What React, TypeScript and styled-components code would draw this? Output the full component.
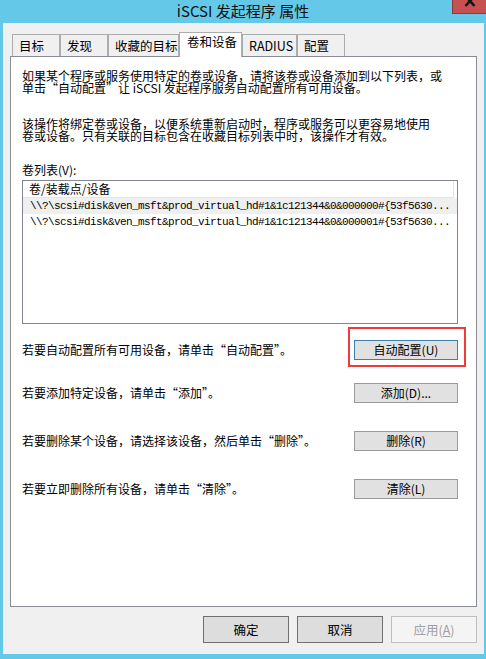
import React from "react";
import styled, { createGlobalStyle } from "styled-components";

const CJK = `"Noto Sans CJK SC", "Noto Sans", sans-serif`;
const MONO = `"Liberation Mono", "DejaVu Sans Mono", monospace`;

const Global = createGlobalStyle`
  html, body { margin: 0; padding: 0; background: #64c8e9; }
  body { font-family: ${CJK}; }
`;

const Window = styled.div`
  width: 486px;
  height: 659px;
  background: #64c8e9;
  display: flex;
  flex-direction: column;
  overflow: hidden;
`;

const TitleBar = styled.div`
  height: 23px;
  flex-shrink: 0;
  display: grid;
  grid-template-columns: 1fr auto 1fr;
  align-items: start;
`;

const Title = styled.div`
  grid-column: 2;
  font: 15px/22px ${CJK};
  color: #111;
  white-space: nowrap;
`;

const CloseButton = styled.div`
  grid-column: 3;
  justify-self: end;
  width: 34px;
  height: 14px;
  box-sizing: border-box;
  background: #c75050;
  border-left: 1px solid #8e3a3a;
  border-bottom: 1px solid #8e3a3a;
  display: flex;
`;

const Client = styled.div`
  margin: 0 2px 5px 3px;
  height: 631px;
  background: #f0f0f0;
  display: flex;
  flex-direction: column;
`;

const TabRow = styled.div`
  display: flex;
  align-items: flex-end;
  height: 25px;
  margin: 9px 0 -1px 9px;
  position: relative;
  z-index: 1;
`;

const Tab = styled.div<{ $w: number; $active?: boolean }>`
  width: ${(p) => p.$w}px;
  box-sizing: border-box;
  border: 1px solid #acacac;
  border-bottom: none;
  height: ${(p) => (p.$active ? 25 : 22)}px;
  margin-bottom: ${(p) => (p.$active ? 0 : 1)}px;
  background: ${(p) => (p.$active ? "#ffffff" : "#f0f0f0")};
  font-family: ${CJK};
  font-size: 12.5px;
  line-height: ${(p) => (p.$active ? 18 : 21)}px;
  padding-left: ${(p) => (p.$active ? 7 : 6)}px;
  color: #000;
  white-space: nowrap;
`;

const Panel = styled.div`
  margin: 0 7px;
  height: 551px;
  box-sizing: border-box;
  border: 1px solid #898c95;
  background: #ffffff;
  padding: 13px 18px 0 11px;
  display: flex;
  flex-direction: column;
`;

const Para = styled.p<{ $mt?: number }>`
  margin: ${(p) => p.$mt ?? 0}px 0 0;
  font: 12px/12px ${CJK};
  color: #000;
  white-space: nowrap;
`;

const ListBox = styled.div`
  margin-top: 4px;
  width: 436px;
  height: 144px;
  box-sizing: border-box;
  border: 1px solid #828790;
  background: #ffffff;
  display: flex;
  flex-direction: column;
`;

const ListHeader = styled.div`
  width: 431px;
  height: 17px;
  box-sizing: border-box;
  border-right: 1px solid #e5e5e5;
  border-bottom: 1px solid #e5e5e5;
  padding-left: 6px;
  font: 12px/16px ${CJK};
  color: #000;
`;

const ListRow = styled.div<{ $hot?: boolean }>`
  height: 16px;
  padding-left: 7px;
  background: ${(p) => (p.$hot ? "#efefef" : "transparent")};
  font-family: ${MONO};
  font-size: 11px;
  letter-spacing: -0.6px;
  line-height: 16px;
  color: #000;
  white-space: nowrap;
  overflow: hidden;
`;

const ActionRow = styled.div<{ $mt: number }>`
  margin-top: ${(p) => p.$mt}px;
  width: 436px;
  height: 20px;
  display: flex;
  align-items: center;
  justify-content: space-between;
`;

const ActionText = styled.span`
  font: 12px/12px ${CJK};
  color: #000;
  white-space: nowrap;
`;

const ButtonSlot = styled.div`
  position: relative;
  display: flex;
`;

const PanelButton = styled.button<{ $default?: boolean }>`
  width: 104px;
  height: 20px;
  box-sizing: border-box;
  padding: 0;
  border: 1px solid ${(p) => (p.$default ? "#3c7fb1" : "#9a9a9a")};
  background: #e1e1e1;
  font: 12px/18px ${CJK};
  color: #000;
`;

const Highlight = styled.div`
  position: absolute;
  left: -6px;
  top: -13px;
  width: 118px;
  height: 40px;
  box-sizing: border-box;
  border: 2px solid #f03a3a;
  pointer-events: none;
`;

const Footer = styled.div`
  display: flex;
  justify-content: flex-end;
  gap: 8px;
  padding: 9px 7px 0 0;
`;

const FooterButton = styled.button<{ $disabled?: boolean }>`
  width: 86px;
  height: 27px;
  box-sizing: border-box;
  padding: 0;
  border: 1px solid ${(p) => (p.$disabled ? "#bfbfbf" : "#707070")};
  background: ${(p) => (p.$disabled ? "#f4f4f4" : "#dddddd")};
  color: ${(p) => (p.$disabled ? "#a0a0a0" : "#000")};
  font: 12.5px/25px ${CJK};
`;

const tabs = [
  { label: "目标", w: 48 },
  { label: "发现", w: 48 },
  { label: "收藏的目标", w: 71 },
  { label: "卷和设备", w: 63, active: true },
  { label: "RADIUS", w: 55 },
  { label: "配置", w: 48 },
];

const devices = [
  "\\\\?\\scsi#disk&ven_msft&prod_virtual_hd#1&1c121344&0&000000#{53f5630...",
  "\\\\?\\scsi#disk&ven_msft&prod_virtual_hd#1&1c121344&0&000001#{53f5630...",
];

const actions = [
  { text: "若要自动配置所有可用设备，请单击“自动配置”。", btn: "自动配置(U)", mt: 16, primary: true },
  { text: "若要添加特定设备，请单击“添加”。", btn: "添加(D)...", mt: 23 },
  { text: "若要删除某个设备，请选择该设备，然后单击“删除”。", btn: "删除(R)", mt: 28 },
  { text: "若要立即删除所有设备，请单击“清除”。", btn: "清除(L)", mt: 28 },
];

export default function App() {
  return (
    <Window lang="zh-CN">
      <Global />
      <TitleBar>
        <Title>iSCSI 发起程序 属性</Title>
        <CloseButton>
          <svg width="33" height="13" viewBox="0 0 33 13">
            <path d="M12.5 -4 L21.5 6 M21.5 -4 L12.5 6" stroke="#141414" strokeWidth="2.6" fill="none" />
          </svg>
        </CloseButton>
      </TitleBar>
      <Client>
        <TabRow>
          {tabs.map((t) => (
            <Tab key={t.label} $w={t.w} $active={t.active}>
              {t.label}
            </Tab>
          ))}
        </TabRow>
        <Panel>
          <Para>
            如果某个程序或服务使用特定的卷或设备，请将该卷或设备添加到以下列表，或
            <br />
            单击“自动配置”让 iSCSI 发起程序服务自动配置所有可用设备。
          </Para>
          <Para $mt={24}>
            该操作将绑定卷或设备，以便系统重新启动时，程序或服务可以更容易地使用
            <br />
            卷或设备。只有关联的目标包含在收藏目标列表中时，该操作才有效。
          </Para>
          <Para $mt={22}>卷列表(V):</Para>
          <ListBox>
            <ListHeader>卷/装载点/设备</ListHeader>
            {devices.map((d, i) => (
              <ListRow key={d} $hot={i === 0}>
                {d}
              </ListRow>
            ))}
          </ListBox>
          {actions.map((a) => (
            <ActionRow key={a.btn} $mt={a.mt}>
              <ActionText>{a.text}</ActionText>
              <ButtonSlot>
                <PanelButton $default={a.primary}>{a.btn}</PanelButton>
                {a.primary && <Highlight />}
              </ButtonSlot>
            </ActionRow>
          ))}
        </Panel>
        <Footer>
          <FooterButton>确定</FooterButton>
          <FooterButton>取消</FooterButton>
          <FooterButton $disabled>
            应用(<u>A</u>)
          </FooterButton>
        </Footer>
      </Client>
    </Window>
  );
}
